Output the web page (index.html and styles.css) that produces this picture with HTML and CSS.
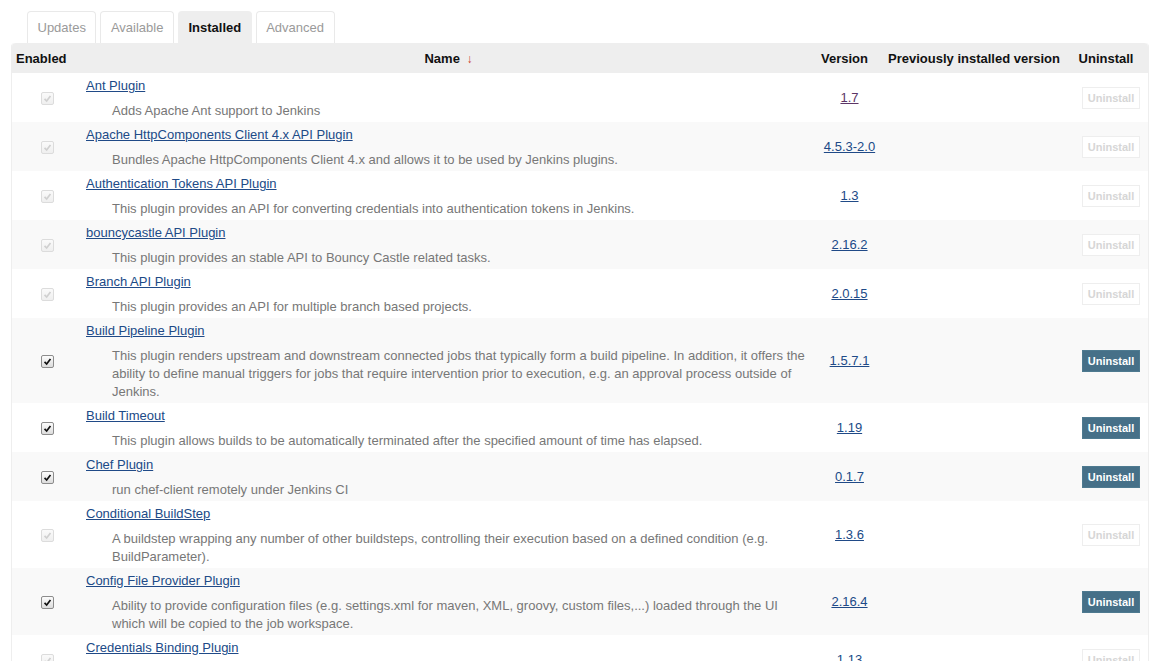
FILE: index.html
```html
<!DOCTYPE html>
<html>
<head>
<meta charset="utf-8">
<link rel="stylesheet" href="styles.css">
</head>
<body>
<div class="page">
  <div class="tabs">
    <a class="tab">Updates</a>
    <a class="tab">Available</a>
    <a class="tab active">Installed</a>
    <a class="tab">Advanced</a>
  </div>
  <table class="plugins">
    <colgroup>
      <col class="c-enabled"><col class="c-name"><col class="c-ver"><col class="c-prev"><col class="c-un">
    </colgroup>
    <thead>
      <tr>
        <th class="h-enabled">Enabled</th>
        <th>Name <span class="arrow">↓</span></th>
        <th class="h-ver">Version</th>
        <th>Previously installed version</th>
        <th>Uninstall</th>
      </tr>
    </thead>
    <tbody>
      <tr>
        <td class="en"><span class="cb dis"><svg viewBox="0 0 13 13"><path d="M3 7 L5.5 9.5 L10 3.5"/></svg></span></td>
        <td class="nm"><a href="#" class="pl">Ant Plugin</a><div class="desc">Adds Apache Ant support to Jenkins</div></td>
        <td class="ver"><a href="#" class="visited">1.7</a></td>
        <td></td>
        <td class="un"><button class="btn dis">Uninstall</button></td>
      </tr>
      <tr>
        <td class="en"><span class="cb dis"><svg viewBox="0 0 13 13"><path d="M3 7 L5.5 9.5 L10 3.5"/></svg></span></td>
        <td class="nm"><a href="#" class="pl">Apache HttpComponents Client 4.x API Plugin</a><div class="desc">Bundles Apache HttpComponents Client 4.x and allows it to be used by Jenkins plugins.</div></td>
        <td class="ver"><a href="#">4.5.3-2.0</a></td>
        <td></td>
        <td class="un"><button class="btn dis">Uninstall</button></td>
      </tr>
      <tr>
        <td class="en"><span class="cb dis"><svg viewBox="0 0 13 13"><path d="M3 7 L5.5 9.5 L10 3.5"/></svg></span></td>
        <td class="nm"><a href="#" class="pl">Authentication Tokens API Plugin</a><div class="desc">This plugin provides an API for converting credentials into authentication tokens in Jenkins.</div></td>
        <td class="ver"><a href="#">1.3</a></td>
        <td></td>
        <td class="un"><button class="btn dis">Uninstall</button></td>
      </tr>
      <tr>
        <td class="en"><span class="cb dis"><svg viewBox="0 0 13 13"><path d="M3 7 L5.5 9.5 L10 3.5"/></svg></span></td>
        <td class="nm"><a href="#" class="pl">bouncycastle API Plugin</a><div class="desc">This plugin provides an stable API to Bouncy Castle related tasks.</div></td>
        <td class="ver"><a href="#">2.16.2</a></td>
        <td></td>
        <td class="un"><button class="btn dis">Uninstall</button></td>
      </tr>
      <tr>
        <td class="en"><span class="cb dis"><svg viewBox="0 0 13 13"><path d="M3 7 L5.5 9.5 L10 3.5"/></svg></span></td>
        <td class="nm"><a href="#" class="pl">Branch API Plugin</a><div class="desc">This plugin provides an API for multiple branch based projects.</div></td>
        <td class="ver"><a href="#">2.0.15</a></td>
        <td></td>
        <td class="un"><button class="btn dis">Uninstall</button></td>
      </tr>
      <tr>
        <td class="en"><span class="cb"><svg viewBox="0 0 13 13"><path d="M3 7 L5.5 9.5 L10 3.5"/></svg></span></td>
        <td class="nm"><a href="#" class="pl">Build Pipeline Plugin</a><div class="desc">This plugin renders upstream and downstream connected jobs that typically form a build pipeline. In addition, it offers the ability to define manual triggers for jobs that require intervention prior to execution, e.g. an approval process outside of Jenkins.</div></td>
        <td class="ver"><a href="#">1.5.7.1</a></td>
        <td></td>
        <td class="un"><button class="btn">Uninstall</button></td>
      </tr>
      <tr>
        <td class="en"><span class="cb"><svg viewBox="0 0 13 13"><path d="M3 7 L5.5 9.5 L10 3.5"/></svg></span></td>
        <td class="nm"><a href="#" class="pl">Build Timeout</a><div class="desc">This plugin allows builds to be automatically terminated after the specified amount of time has elapsed.</div></td>
        <td class="ver"><a href="#">1.19</a></td>
        <td></td>
        <td class="un"><button class="btn">Uninstall</button></td>
      </tr>
      <tr>
        <td class="en"><span class="cb"><svg viewBox="0 0 13 13"><path d="M3 7 L5.5 9.5 L10 3.5"/></svg></span></td>
        <td class="nm"><a href="#" class="pl">Chef Plugin</a><div class="desc">run chef-client remotely under Jenkins CI</div></td>
        <td class="ver"><a href="#">0.1.7</a></td>
        <td></td>
        <td class="un"><button class="btn">Uninstall</button></td>
      </tr>
      <tr>
        <td class="en"><span class="cb dis"><svg viewBox="0 0 13 13"><path d="M3 7 L5.5 9.5 L10 3.5"/></svg></span></td>
        <td class="nm"><a href="#" class="pl">Conditional BuildStep</a><div class="desc">A buildstep wrapping any number of other buildsteps, controlling their execution based on a defined condition (e.g. BuildParameter).</div></td>
        <td class="ver"><a href="#">1.3.6</a></td>
        <td></td>
        <td class="un"><button class="btn dis">Uninstall</button></td>
      </tr>
      <tr>
        <td class="en"><span class="cb"><svg viewBox="0 0 13 13"><path d="M3 7 L5.5 9.5 L10 3.5"/></svg></span></td>
        <td class="nm"><a href="#" class="pl">Config File Provider Plugin</a><div class="desc">Ability to provide configuration files (e.g. settings.xml for maven, XML, groovy, custom files,...) loaded through the UI which will be copied to the job workspace.</div></td>
        <td class="ver"><a href="#">2.16.4</a></td>
        <td></td>
        <td class="un"><button class="btn">Uninstall</button></td>
      </tr>
      <tr>
        <td class="en"><span class="cb dis"><svg viewBox="0 0 13 13"><path d="M3 7 L5.5 9.5 L10 3.5"/></svg></span></td>
        <td class="nm"><a href="#" class="pl">Credentials Binding Plugin</a><div class="desc">Allows credentials to be bound to environment variables for use from miscellaneous build steps.</div></td>
        <td class="ver"><a href="#">1.13</a></td>
        <td></td>
        <td class="un"><button class="btn dis">Uninstall</button></td>
      </tr>
    </tbody>
  </table>
</div>
</body>
</html>
```
FILE: styles.css
```css
html, body {
  margin: 0;
  padding: 0;
  background: #fff;
}
body {
  font-family: "Liberation Sans", Arial, sans-serif;
  font-size: 13px;
  color: #222;
  overflow: hidden;
}
.page {
  padding: 11px 0 0 11px;
}
.tabs {
  display: flex;
  gap: 4px;
  padding-left: 16px;
}
.tab {
  display: block;
  height: 31px;
  line-height: 31px;
  padding: 0 9.5px;
  border: 1px solid #e9e9e9;
  border-bottom: none;
  border-radius: 4px 4px 0 0;
  color: #9a9a9a;
  background: #fff;
  text-decoration: none;
}
.tab.active {
  background: #eee;
  border-color: #eee;
  color: #111;
  font-weight: bold;
}
.plugins {
  width: 1138px;
  table-layout: fixed;
  border-collapse: separate;
  border-spacing: 0;
  border: 1px solid #eee;
  border-top: none;
  border-radius: 4px 4px 0 0;
}
.c-enabled { width: 70px; }
.c-name { width: 733px; }
.c-ver { width: 69px; }
.c-prev { width: 180px; }
.c-un { width: 84px; }
.plugins th {
  background: #eee;
  height: 30px;
  padding: 0;
  font-weight: bold;
  color: #111;
  text-align: center;
  vertical-align: middle;
}
.plugins th:first-child { border-top-left-radius: 4px; }
.plugins th:last-child { border-top-right-radius: 4px; }
.plugins th.h-enabled {
  text-align: left;
  padding-left: 4px;
}
.plugins th.h-ver { padding-right: 10px; }
.arrow {
  color: #cc3a2a;
  font-size: 12px;
  font-weight: normal;
  margin-left: 3px;
}
.plugins td {
  padding: 0;
  vertical-align: middle;
}
.plugins tbody tr:nth-child(even) td { background: #f9f9f9; }
.en { text-align: center; }
.cb {
  display: inline-block;
  width: 11px;
  height: 11px;
  border: 1px solid #8c8c8c;
  border-radius: 2px;
  background: linear-gradient(#fcfcfc, #dcdcdc);
  vertical-align: middle;
  margin-left: 1px;
}
.cb svg {
  display: block;
  width: 11px;
  height: 11px;
  fill: none;
  stroke: #111;
  stroke-width: 2;
}
.cb.dis {
  border-color: #dcdcdc;
  background: linear-gradient(#fafafa, #efefef);
}
.cb.dis svg { stroke: #d0d0d0; }
.nm {
  padding: 4px 4px 2px 4px !important;
}
a {
  color: #204a87;
  text-decoration: underline;
}
a.visited { color: #5c3566; }
.pl {
  display: inline-block;
  line-height: 18px;
  vertical-align: top;
}
.desc {
  margin-top: 7px;
  padding-left: 26px;
  line-height: 18px;
  color: #777;
}
.ver { text-align: center; }
.un {
  text-align: right;
  padding-right: 8px !important;
}
.btn {
  font-family: "Liberation Sans", Arial, sans-serif;
  font-size: 11px;
  font-weight: bold;
  height: 22px;
  width: 58px;
  padding: 0;
  border: 1px solid #4e7a90;
  border-radius: 0;
  background: #467088;
  color: #fff;
  vertical-align: middle;
}
.btn.dis {
  background: #fff;
  border-color: #eee;
  color: #d6d6d6;
}
```
